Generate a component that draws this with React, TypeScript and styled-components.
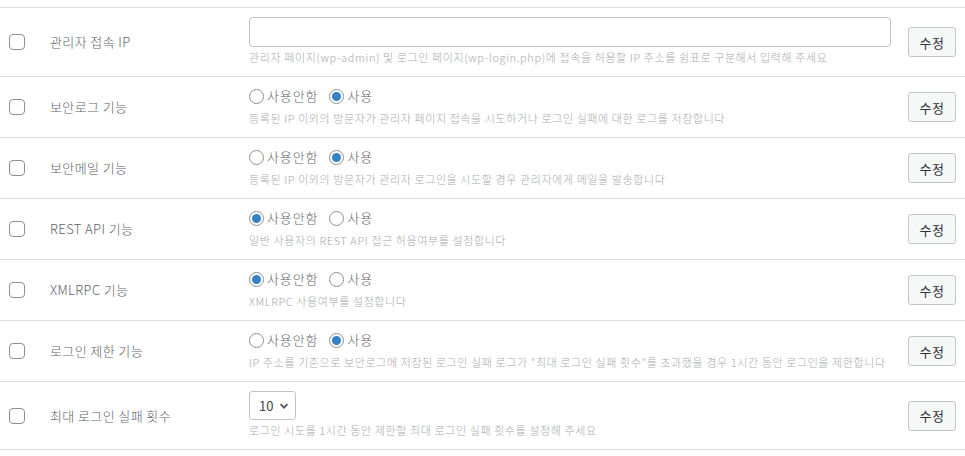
import React from "react";
import styled, { createGlobalStyle } from "styled-components";

const Global = createGlobalStyle`
  html, body { margin: 0; padding: 0; background: #fff; }
  body { font-family: "Noto Sans CJK KR", "Noto Sans", sans-serif; color: #3c434a; }
`;

const Table = styled.div`
  padding-top: 7px;
  width: 965px;
`;

const Row = styled.div`
  display: grid;
  grid-template-columns: 50px 199px 1fr 48px;
  align-items: center;
  border-top: 1px solid #dcdcde;
  &:last-child { border-bottom: 1px solid #dcdcde; }
  padding-right: 9px;
`;

const CheckCell = styled.div`
  padding-left: 9px;
  display: flex;
  align-items: center;
`;

const Checkbox = styled.span`
  display: inline-block;
  width: 14px;
  height: 14px;
  border: 1px solid #8c8f94;
  border-radius: 4px;
  background: #fff;
`;

const Label = styled.div`
  font-size: 13px;
  font-weight: 300;
  line-height: 20px;
  color: #5d6369;
  letter-spacing: 0.4px;
`;

const Field = styled.div`
  display: flex;
  flex-direction: column;
  align-items: flex-start;
  gap: 2px;
  padding: 9px 17px 11px 0;
  min-width: 0;
`;

const TextInput = styled.div`
  box-sizing: border-box;
  width: 100%;
  height: 30px;
  border: 1px solid #c3c4c7;
  border-radius: 4px;
  background: #fff;
`;

const Desc = styled.div`
  font-size: 11px;
  font-weight: 300;
  line-height: 16px;
  color: #a7aaad;
  white-space: nowrap;
  letter-spacing: 0.6px;
`;

const RadioGroup = styled.div`
  display: flex;
  align-items: center;
  height: 20px;
  gap: 11px;
  margin-bottom: 2px;
`;

const RadioLabel = styled.span`
  display: inline-flex;
  align-items: center;
  gap: 3px;
  font-size: 13px;
  font-weight: 300;
  color: #5d6369;
  line-height: 20px;
  letter-spacing: 0.9px;
`;

const RadioCircle = styled.span<{ $on?: boolean }>`
  box-sizing: border-box;
  width: 15px;
  height: 15px;
  border: 1px solid #8c8f94;
  border-radius: 50%;
  background: #fff;
  display: inline-flex;
  align-items: center;
  justify-content: center;
  &::before {
    content: "";
    display: ${(p) => (p.$on ? "block" : "none")};
    width: 9px;
    height: 9px;
    border-radius: 50%;
    background: #3582c4;
  }
`;

const Select = styled.div`
  box-sizing: border-box;
  width: 47px;
  height: 29px;
  border: 1px solid #c3c4c7;
  border-radius: 3px;
  display: flex;
  align-items: center;
  justify-content: space-between;
  padding: 0 6px 0 9px;
  font-size: 13px;
  color: #3c434a;
`;

const Button = styled.button`
  box-sizing: border-box;
  width: 48px;
  height: 30px;
  padding: 0;
  border: 1px solid #c3c4c7;
  border-radius: 3px;
  background: #f6f7f7;
  font-family: inherit;
  font-size: 13px;
  color: #2c3338;
  letter-spacing: 0.5px;
  cursor: pointer;
`;

type Kind = "input" | "radio" | "select";

interface Item {
  label: string;
  kind: Kind;
  on?: boolean;
  desc: string;
}

const items: Item[] = [
  {
    label: "관리자 접속 IP",
    kind: "input",
    desc: "관리자 페이지(wp-admin) 및 로그인 페이지(wp-login.php)에 접속을 허용할 IP 주소를 쉼표로 구분해서 입력해 주세요",
  },
  {
    label: "보안로그 기능",
    kind: "radio",
    on: true,
    desc: "등록된 IP 이외의 방문자가 관리자 페이지 접속을 시도하거나 로그인 실패에 대한 로그를 저장합니다",
  },
  {
    label: "보안메일 기능",
    kind: "radio",
    on: true,
    desc: "등록된 IP 이외의 방문자가 관리자 로그인을 시도할 경우 관리자에게 메일을 발송합니다",
  },
  {
    label: "REST API 기능",
    kind: "radio",
    on: false,
    desc: "일반 사용자의 REST API 접근 허용여부를 설정합니다",
  },
  {
    label: "XMLRPC 기능",
    kind: "radio",
    on: false,
    desc: "XMLRPC 사용여부를 설정합니다",
  },
  {
    label: "로그인 제한 기능",
    kind: "radio",
    on: true,
    desc: "IP 주소를 기준으로 보안로그에 저장된 로그인 실패 로그가 \"최대 로그인 실패 횟수\"를 초과했을 경우 1시간 동안 로그인을 제한합니다",
  },
  {
    label: "최대 로그인 실패 횟수",
    kind: "select",
    desc: "로그인 시도를 1시간 동안 제한할 최대 로그인 실패 횟수를 설정해 주세요",
  },
];

const Chevron = () => (
  <svg width="10" height="10" viewBox="0 0 10 10">
    <path d="M1.5 3.2 L5 6.7 L8.5 3.2" fill="none" stroke="#50575e" strokeWidth="1.8" />
  </svg>
);

export default function App() {
  return (
    <>
      <Global />
      <Table>
        {items.map((it) => (
          <Row key={it.label}>
            <CheckCell>
              <Checkbox />
            </CheckCell>
            <Label>{it.label}</Label>
            <Field>
              {it.kind === "input" && <TextInput />}
              {it.kind === "radio" && (
                <RadioGroup>
                  <RadioLabel>
                    <RadioCircle $on={!it.on} />
                    사용안함
                  </RadioLabel>
                  <RadioLabel>
                    <RadioCircle $on={it.on} />
                    사용
                  </RadioLabel>
                </RadioGroup>
              )}
              {it.kind === "select" && (
                <Select>
                  <span>10</span>
                  <Chevron />
                </Select>
              )}
              <Desc>{it.desc}</Desc>
            </Field>
            <Button>수정</Button>
          </Row>
        ))}
      </Table>
    </>
  );
}
